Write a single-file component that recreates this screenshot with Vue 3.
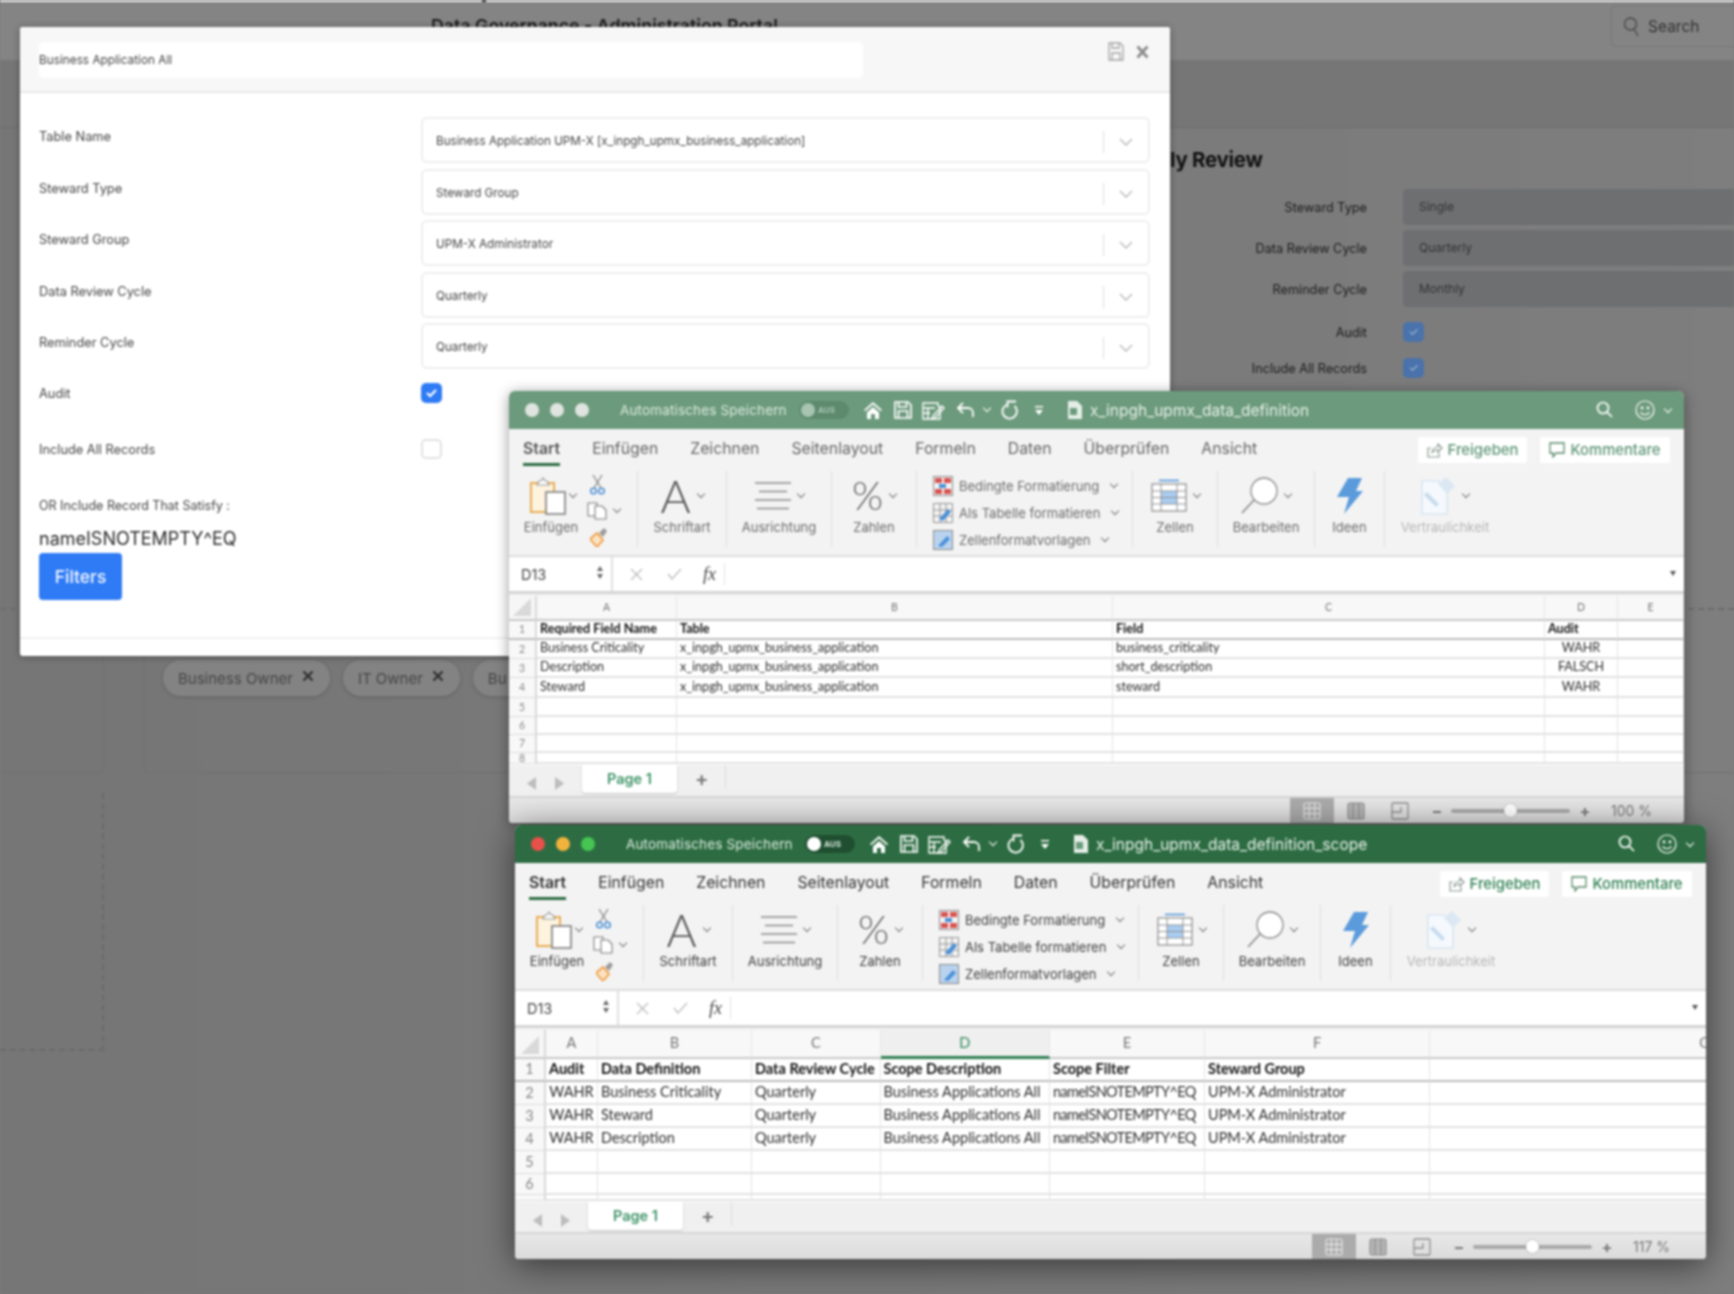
<script setup>
const fields = [
  { label: 'Table Name', value: 'Business Application UPM-X [x_inpgh_upmx_business_application]' },
  { label: 'Steward Type', value: 'Steward Group' },
  { label: 'Steward Group', value: 'UPM-X Administrator' },
  { label: 'Data Review Cycle', value: 'Quarterly' },
  { label: 'Reminder Cycle', value: 'Quarterly' }
]
const bgForm = [
  { label: 'Steward Type', value: 'Single' },
  { label: 'Data Review Cycle', value: 'Quarterly' },
  { label: 'Reminder Cycle', value: 'Monthly' }
]
const tabs = ['Start', 'Einfügen', 'Zeichnen', 'Seitenlayout', 'Formeln', 'Daten', 'Überprüfen', 'Ansicht']
const app = 'x_inpgh_upmx_business_application'
const sheets = [
  {
    id: 'w1',
    file: 'x_inpgh_upmx_data_definition',
    zoom: '100 %',
    heads: ['A', 'B', 'C', 'D', 'E'],
    activeCol: -1,
    center: 3,
    numbered: 8,
    rows: [
      ['Required Field Name', 'Table', 'Field', 'Audit', ''],
      ['Business Criticality', app, 'business_criticality', 'WAHR', ''],
      ['Description', app, 'short_description', 'FALSCH', ''],
      ['Steward', app, 'steward', 'WAHR', ''],
      ['', '', '', '', ''],
      ['', '', '', '', ''],
      ['', '', '', '', ''],
      ['', '', '', '', '']
    ]
  },
  {
    id: 'w2',
    file: 'x_inpgh_upmx_data_definition_scope',
    zoom: '117 %',
    heads: ['A', 'B', 'C', 'D', 'E', 'F', 'G'],
    activeCol: 3,
    center: 0,
    numbered: 6,
    rows: [
      ['Audit', 'Data Definition', 'Data Review Cycle', 'Scope Description', 'Scope Filter', 'Steward Group', ''],
      ['WAHR', 'Business Criticality', 'Quarterly', 'Business Applications All', 'nameISNOTEMPTY^EQ', 'UPM-X Administrator', ''],
      ['WAHR', 'Steward', 'Quarterly', 'Business Applications All', 'nameISNOTEMPTY^EQ', 'UPM-X Administrator', ''],
      ['WAHR', 'Description', 'Quarterly', 'Business Applications All', 'nameISNOTEMPTY^EQ', 'UPM-X Administrator', ''],
      ['', '', '', '', '', '', ''],
      ['', '', '', '', '', '', ''],
      ['', '', '', '', '', '', '']
    ]
  }
]
const formats = [
  { label: 'Bedingte Formatierung', kind: 'cond' },
  { label: 'Als Tabelle formatieren', kind: 'table' },
  { label: 'Zellenformatvorlagen', kind: 'style' }
]
</script>

<template>
  <div class="root">
    <div class="page">
      <div class="strip"><i class="strip-mark"></i></div>
      <header class="topbar">
        <h1 class="portal">Data Governance - Administration Portal</h1>
        <div class="search">
          <svg width="16" height="22" viewBox="0 0 16 22" fill="none" stroke="#4a4a4a" stroke-width="1.4"><circle cx="7.500" cy="9" r="6"/><path d="M11 14l4 7"/></svg>
          <span>Search</span>
        </div>
      </header>
      <div class="subbar"></div>
      <section class="workspace">
        <h2 class="review">ly Review</h2>
        <div v-for="r in bgForm" :key="r.label" class="bg-row">
          <label>{{ r.label }}</label>
          <div class="bg-input">{{ r.value }}</div>
        </div>
        <div class="bg-check first">
          <label>Audit</label>
          <span class="bg-box">✓</span>
        </div>
        <div class="bg-check">
          <label>Include All Records</label>
          <span class="bg-box">✓</span>
        </div>
      </section>
      <section class="panels">
        <div class="panel-left"></div>
        <div class="panel-right">
          <span class="chip">Business Owner <svg width="12" height="12" viewBox="0 0 12 12" stroke="#2f2f2f" stroke-width="2.200"><path d="M1.500 1.500l9 9M10.500 1.500l-9 9"/></svg></span>
          <span class="chip">IT Owner <svg width="12" height="12" viewBox="0 0 12 12" stroke="#2f2f2f" stroke-width="2.200"><path d="M1.500 1.500l9 9M10.500 1.500l-9 9"/></svg></span>
          <span class="chip chip-cut">Bu</span>
        </div>
      </section>
      <div class="drop"></div>
    </div>

    <div class="modal">
      <div class="modal-head">
        <div class="modal-title">Business Application All</div>
        <svg class="modal-save" width="16" height="19" viewBox="0 0 16 19" fill="none" stroke="#a5a5a5" stroke-width="1.3"><path d="M1 1h11l3 3v14H1z"/><path d="M4 1v5h7V1M4 18v-7h8v7"/></svg>
        <svg class="modal-x" width="13" height="14" viewBox="0 0 13 14" stroke="#8b8b8b" stroke-width="2.800"><path d="M1.500 1.500l10 11M11.500 1.500l-10 11"/></svg>
      </div>
      <div class="modal-body">
        <div v-for="f in fields" :key="f.label" class="f-row">
          <label>{{ f.label }}</label>
          <div class="select">
            <span class="select-val">{{ f.value }}</span>
            <svg class="select-chev" width="14" height="8" viewBox="0 0 14 8" fill="none" stroke="#b5b5b5" stroke-width="1.3"><path d="M1 1l6 6 6-6"/></svg>
          </div>
        </div>
        <div class="c-row audit">
          <label>Audit</label>
          <span class="check on">
            <svg width="13" height="10" viewBox="0 0 13 10" fill="none" stroke="#fff" stroke-width="2.2"><path d="M2 5l3.2 3L11 2"/></svg>
          </span>
        </div>
        <div class="c-row include">
          <label>Include All Records</label>
          <span class="check"></span>
        </div>
        <div class="or-label">OR Include Record That Satisfy :</div>
        <div class="query">nameISNOTEMPTY^EQ</div>
        <button class="filters">Filters</button>
        <div class="modal-foot"></div>
      </div>
    </div>

    <div v-for="s in sheets" :key="s.id" class="xl" :class="s.id">
      <div class="title">
        <span class="light l1"></span><span class="light l2"></span><span class="light l3"></span>
        <span class="autosave">Automatisches Speichern</span>
        <span class="toggle"><i></i><em>AUS</em></span>
        <svg class="t-home" width="18" height="17" viewBox="0 0 18 17" fill="#fff"><path d="M9 0L0 8l1.2 1.3L9 2.6l7.8 6.700L18 8zM3 10.500V17h4v-5h4v5h4v-6.500L9 5z"/></svg>
        <svg class="t-save" width="18" height="18" viewBox="0 0 18 18" fill="none" stroke="#fff" stroke-width="1.7"><path d="M1 1h13l3 3v13H1z"/><path d="M4.500 1v5h8V1M4.500 17v-7h9v7"/></svg>
        <svg class="t-edit" width="24" height="20" viewBox="0 0 24 20" fill="none" stroke="#fff" stroke-width="1.4"><path d="M1 3h15v3l2 1v12H1zM1 8h12M6 8v11M1 13h7"/><path d="M11 16l9-10 2 2-9 10-3 1z"/></svg>
        <svg class="t-undo" width="19" height="16" viewBox="0 0 19 16" fill="none" stroke="#fff" stroke-width="1.8"><path d="M7 1L2 6l5 5M2 6h10a5 5 0 0 1 5 5v4"/></svg>
        <i class="chev wh t-ch1"></i>
        <svg class="t-redo" width="18" height="20" viewBox="0 0 18 20" fill="none" stroke="#fff" stroke-width="1.8"><path d="M16 1.500H7.500v6"/><path d="M7.500 4.500a7.200 7.200 0 1 0 7 1.500"/></svg>
        <svg class="t-more" width="8" height="9" viewBox="0 0 8 9" fill="#fff"><path d="M0 0h8v1.500H0zM0 4h8L4 9z"/></svg>
        <svg class="t-file" width="14" height="18" viewBox="0 0 14 18"><path d="M0 0h9l5 5v13H0z" fill="#e4eee7"/><rect x="2" y="7" width="7" height="7" fill="#6c9c7d"/></svg>
        <span class="fname">{{ s.file }}</span>
        <svg class="t-search" width="17" height="17" viewBox="0 0 17 17" fill="none" stroke="#fff" stroke-width="1.7"><circle cx="7" cy="7" r="5.500"/><path d="M11 11l5 5"/></svg>
        <svg class="t-face" width="20" height="20" viewBox="0 0 20 20" fill="none" stroke="#fff" stroke-width="1.2"><circle cx="10" cy="10" r="9"/><circle cx="7" cy="8" r=".8"/><circle cx="13" cy="8" r=".8"/><path d="M5.500 12.500c2.500 3 6.500 3 9 0"/></svg>
        <i class="chev wh t-ch2"></i>
      </div>

      <div class="ribbon">
        <div class="tabs">
          <span v-for="(t, i) in tabs" :key="t" class="tab" :class="{ cur: i === 0 }">{{ t }}</span>
          <span class="btns">
            <span class="btn b-share">
              <svg width="16" height="15" viewBox="0 0 16 15" fill="none" stroke="#8a9a90" stroke-width="1.2"><path d="M4 5H1v9h11v-4"/><path d="M5 10c0-4 3-6 6-6V1l4 4-4 4V7c-3 0-5 1-6 3z"/></svg>
              Freigeben
            </span>
            <span class="btn b-comm">
              <svg width="16" height="16" viewBox="0 0 16 16" fill="none" stroke="#5a8a6b" stroke-width="1.300"><path d="M1 1h14v10H7l-3 4v-4H1z"/></svg>
              Kommentare
            </span>
          </span>
        </div>
        <div class="groups">
          <div class="group g1">
            <div class="paste">
              <div class="gicon">
                <svg width="36" height="38" viewBox="0 0 36 38" fill="none"><path d="M1 6h23v29H1z" fill="#fdf3df" stroke="#e7ad56" stroke-width="2"/><path d="M7 8l2-4h2l2-3 2 3h2l2 4z" fill="#fff" stroke="#9a9a9a" stroke-width="1.200"/><rect x="16" y="15" width="19" height="22" fill="#fff" stroke="#7e7e7e" stroke-width="1.600"/></svg>
                <i class="chev"></i>
              </div>
              <span class="glabel">Einfügen</span>
            </div>
            <div class="mini">
              <svg width="15" height="20" viewBox="0 0 15 20" fill="none" stroke="#7c7c7c" stroke-width="1.100"><path d="M3 0l8 13M12 0L4 13"/><circle cx="3.500" cy="16" r="2.800" stroke="#4c8fd4" stroke-width="1.500"/><circle cx="11.500" cy="16" r="2.800" stroke="#4c8fd4" stroke-width="1.500"/></svg>
              <span class="mini-row">
                <svg width="21" height="18" viewBox="0 0 21 18" fill="#fff" stroke="#7c7c7c" stroke-width="1.100"><path d="M1 1h9v13H1z"/><path d="M8 4h7l4 4v9H8z"/></svg>
                <i class="chev"></i>
              </span>
              <svg width="18" height="20" viewBox="0 0 18 20"><path d="M0 12l7-6 6 7-6 7z" fill="#fbe3c2" stroke="#ee9f48" stroke-width="1.800"/><path d="M9 6l5-5 3 3-4 6z" fill="#9b9b9b"/></svg>
            </div>
          </div>
          <div class="group g2">
            <div class="gicon"><span class="big-a">A</span><i class="chev"></i></div>
            <span class="glabel">Schriftart</span>
          </div>
          <div class="group g3">
            <div class="gicon">
              <svg width="36" height="28" viewBox="0 0 36 28" stroke="#8a8a8a" stroke-width="1.600"><path d="M0 1h36M4 9.500h28M0 18h36M2 26.500h32"/></svg>
              <i class="chev"></i>
            </div>
            <span class="glabel">Ausrichtung</span>
          </div>
          <div class="group g4">
            <div class="gicon"><span class="big-p">%</span><i class="chev"></i></div>
            <span class="glabel">Zahlen</span>
          </div>
          <div class="group g5">
            <div v-for="f in formats" :key="f.kind" class="fmt">
              <svg v-if="f.kind === 'cond'" width="20" height="20" viewBox="0 0 20 20"><rect x=".5" y=".5" width="19" height="19" fill="#f4f4f4" stroke="#8a8a8a"/><rect x="2" y="2" width="7" height="5" fill="#d9534f"/><rect x="11" y="2" width="7" height="5" fill="#d9534f"/><rect x="6" y="8" width="7" height="4" fill="#4a90d9"/><rect x="2" y="13" width="7" height="5" fill="#d9534f"/><rect x="11" y="13" width="7" height="5" fill="#d9534f"/></svg>
              <svg v-else-if="f.kind === 'table'" width="20" height="20" viewBox="0 0 20 20" fill="none"><path d="M.5.500h19v19H.5zM.5 7h19M.5 13h19M7 .500v19M13 .500v19" stroke="#8a8a8a" stroke-width=".9"/><path d="M6 16L15 6l3 3-8 9z" fill="#4a90d9"/></svg>
              <svg v-else width="20" height="20" viewBox="0 0 20 20" fill="none"><rect x=".5" y=".5" width="19" height="19" fill="#b9d3ee" stroke="#8a8a8a"/><path d="M5 16L14 6l3 3-8 8z" fill="#4a90d9"/></svg>
              <span>{{ f.label }}</span>
              <i class="chev"></i>
            </div>
          </div>
          <div class="group g6">
            <div class="gicon">
              <svg width="36" height="33" viewBox="0 0 36 33" fill="none"><path d="M8 1.500h20" stroke="#4a90d9" stroke-width="1.500"/><rect x="1" y="5" width="34" height="27" fill="#fff" stroke="#8a8a8a" stroke-width="1.200"/><rect x="10" y="12" width="16" height="13" fill="#a9cdf0"/><path d="M1 12h34M1 18.500h34M1 25h34M10 5v27M26 5v27" stroke="#8a8a8a" stroke-width=".9"/></svg>
              <i class="chev"></i>
            </div>
            <span class="glabel">Zellen</span>
          </div>
          <div class="group g7">
            <div class="gicon">
              <svg width="37" height="37" viewBox="0 0 37 37" fill="none" stroke="#8a8a8a"><circle cx="23" cy="14" r="13" fill="#fff" stroke-width="1.300"/><path d="M13 23L1 36" stroke-width="1.600"/></svg>
              <i class="chev"></i>
            </div>
            <span class="glabel">Bearbeiten</span>
          </div>
          <div class="group g8">
            <div class="gicon">
              <svg width="26" height="36" viewBox="0 0 26 36"><path d="M11 0h14l-6 13h7L7 36l5-17H0z" fill="#5b9bdc"/></svg>
            </div>
            <span class="glabel">Ideen</span>
          </div>
          <div class="group g9">
            <div class="gicon">
              <svg width="35" height="38" viewBox="0 0 35 38" fill="none"><path d="M1 4h16l9 9v24H1z" fill="#f5f9fd" stroke="#cfe0ef" stroke-width="1.200"/><path d="M6 15l12 12-3 3L3 18z" fill="#c9dcee"/><path d="M17 7l8-7 9 9-8 8z" fill="#dbe8f4"/></svg>
              <i class="chev"></i>
            </div>
            <span class="glabel muted">Vertraulichkeit</span>
          </div>
        </div>
      </div>

      <div class="formula">
        <div class="namebox">
          <span>D13</span>
          <span class="stepper"><i class="up"></i><i class="dn"></i></span>
        </div>
        <svg class="fb-x" width="13" height="13" viewBox="0 0 13 13" stroke="#bdbdbd" stroke-width="1.300"><path d="M1 1l11 11M12 1L1 12"/></svg>
        <svg class="fb-c" width="15" height="12" viewBox="0 0 15 12" fill="none" stroke="#bdbdbd" stroke-width="1.300"><path d="M1 6l4 5 9-10"/></svg>
        <span class="fb-f">fx</span>
        <span class="fb-line"></span>
        <i class="fb-arrow"></i>
      </div>

      <div class="grid-wrap">
        <div class="sheet">
          <div class="corner"><svg width="18" height="18" viewBox="0 0 18 18"><path d="M18 0v18H0z" fill="#d9d9d9"/></svg></div>
          <div v-for="(h, i) in s.heads" :key="h" class="colh" :class="{ act: i === s.activeCol }">{{ h }}</div>
          <template v-for="(r, ri) in s.rows" :key="ri">
            <div class="rowh" :class="{ first: ri === 0 }">{{ ri < s.numbered ? ri + 1 : '' }}</div>
            <div v-for="(c, ci) in r" :key="ci" class="cell" :class="{ bold: ri === 0, first: ri === 0, mid: ri > 0 && ci === s.center, tight: c.startsWith('name') }">{{ c }}</div>
          </template>
        </div>
      </div>

      <div class="sheetbar">
        <svg class="nav" width="9" height="13" viewBox="0 0 9 13" fill="#bdbdbd"><path d="M9 0v13L0 6.500z"/></svg>
        <svg class="nav n2" width="9" height="13" viewBox="0 0 9 13" fill="#bdbdbd"><path d="M0 0v13l9-6.500z"/></svg>
        <span class="page1">Page 1</span>
        <span class="plus">+</span>
      </div>

      <div class="status">
        <span class="view on"><svg width="18" height="18" viewBox="0 0 18 18" fill="none" stroke="#e6e6e6" stroke-width="1.200"><rect x="1" y="1" width="16" height="16" rx="2"/><path d="M1 6.300h16M1 11.600h16M6.300 1v16M11.600 1v16"/></svg></span>
        <span class="view"><svg width="18" height="18" viewBox="0 0 18 18" fill="#b5b5b5" stroke="#8e8e8e" stroke-width="1.200"><rect x="1" y="1" width="16" height="16" rx="2"/><path d="M6 1v16M12 1v16"/></svg></span>
        <span class="view"><svg width="18" height="18" viewBox="0 0 18 18" fill="none" stroke="#8e8e8e" stroke-width="1.300"><rect x="1" y="1" width="16" height="16" rx="1"/><path d="M1 10h9V5"/></svg></span>
        <span class="minus">−</span>
        <span class="slider"><i></i></span>
        <span class="plus2">+</span>
        <span class="pct">{{ s.zoom }}</span>
      </div>
    </div>
  </div>
</template>

<style>
html, body { margin: 0; background: #7b7b7b; }
</style>

<style scoped>
.root { position: relative; width: 1734px; height: 1294px; overflow: hidden; filter: blur(.8px); font-family: Inter, "Liberation Sans", sans-serif; }
.page { height: 1294px; background: linear-gradient(90deg, #767676 0%, #7a7a7a 60%, #7e7e7e 100%); color: #222; }
.strip { height: 2px; background: #ececec; position: relative; }
.strip-mark { position: absolute; left: 482px; top: 0; width: 4px; height: 2px; background: #444; }
.topbar { height: 58px; background: #848484; display: flex; align-items: flex-start; }
.portal { margin: 13px 0 0 431px; font-size: 17.800px; line-height: 22px; font-weight: 600; color: #1d1d1d; white-space: nowrap; }
.search { margin: 3px 0 0 auto; width: 123px; height: 42px; box-sizing: border-box; border: 1px solid #777; border-right: 0; border-radius: 5px 0 0 5px; display: flex; align-items: center; gap: 9px; padding-left: 11px; color: #333; font-size: 15.500px; }
.subbar { height: 68px; background: #767676; border-bottom: 1px solid #6c6c6c; box-sizing: border-box; }
.workspace { height: 480px; padding-top: 20px; box-sizing: border-box; }
.review { margin: 0 0 18px 1170px; font-size: 20.500px; line-height: 23px; font-weight: 700; letter-spacing: -.3px; color: #111; white-space: nowrap; }
.bg-row { display: grid; grid-template-columns: 1367px 1fr; column-gap: 36px; margin-bottom: 5px; }
.bg-row label, .bg-check label { text-align: right; font-size: 12.700px; align-self: center; color: #1a1a1a; }
.bg-input { height: 36px; line-height: 36px; background: #6e6f71; border-radius: 4px 0 0 4px; padding-left: 16px; font-size: 12px; color: #333; }
.bg-check { display: grid; grid-template-columns: 1367px 21px; column-gap: 36px; margin-top: 16px; height: 20px; }
.bg-check.first { margin-top: 15px; }
.bg-box { background: #4a72ab; border-radius: 5px; color: #a3bbda; font-size: 12px; line-height: 20px; text-align: center; }
.panels { height: 165px; display: flex; gap: 40px; border-top: 2px dashed #6b6b6b; box-sizing: border-box; }
.panel-left { width: 104px; border-right: 1px solid #6f6f6f; border-bottom: 1px solid #6f6f6f; box-sizing: border-box; }
.panel-right { flex: 1; border-left: 1px solid #6f6f6f; border-bottom: 1px solid #6f6f6f; padding: 50px 0 0 18px; display: flex; gap: 13px; align-items: flex-start; overflow: hidden; }
.chip { height: 36px; box-sizing: border-box; display: inline-flex; align-items: center; gap: 9px; padding: 0 16px 0 15px; border-radius: 18px; background: #838383; box-shadow: 0 1px 4px rgba(0,0,0,.18); font-size: 15px; color: #464646; white-space: nowrap; }
.chip svg { margin-top: -5px; }
.chip-cut { width: 70px; }
.drop { width: 104px; height: 258px; margin-top: 20px; border-right: 2px dashed #6a6a6a; border-bottom: 2px dashed #6a6a6a; box-sizing: border-box; }

.modal { position: absolute; left: 20px; top: 27px; width: 1150px; height: 629px; background: #fff; border-radius: 3px; box-shadow: 0 1px 7px rgba(0,0,0,.35); color: #444; }
.modal-head { height: 66px; background: #f7f7f7; border-bottom: 2px solid #e9e9e9; box-sizing: border-box; position: relative; padding: 15px 0 0 19px; border-radius: 3px 3px 0 0; }
.modal-title { width: 824px; height: 36px; line-height: 37px; background: #fff; border-radius: 4px; font-size: 11.800px; color: #444; }
.modal-save { position: absolute; left: 1088px; top: 15px; }
.modal-x { position: absolute; left: 1116px; top: 18px; }
.modal-body { padding: 24px 20px 0 19px; }
.f-row { display: grid; grid-template-columns: 382px 729px; height: 46px; margin-bottom: 5.500px; }
.f-row label { font-size: 12.800px; padding-top: 12px; color: #444; }
.select { height: 46px; box-sizing: border-box; border: 2px solid #eee; border-radius: 6px; display: flex; align-items: center; padding: 2px 0 0 13px; position: relative; font-size: 11.700px; color: #444; }
.select::after { content: ""; position: absolute; right: 44px; top: 12px; height: 22px; border-right: 1px solid #ddd; }
.select-chev { position: absolute; right: 15px; top: 19px; }
.c-row { display: grid; grid-template-columns: 382px 21px; height: 20px; font-size: 12.800px; color: #444; align-items: center; }
.c-row.audit { margin-top: 14px; }
.c-row.include { margin-top: 36px; }
.check { width: 21px; height: 20px; box-sizing: border-box; border: 2px solid #e2e2e2; border-radius: 5px; display: flex; align-items: center; justify-content: center; }
.check.on { background: #2f7bf5; border-color: #2f7bf5; }
.or-label { margin-top: 40px; font-size: 12.500px; line-height: 14px; color: #444; }
.query { margin-top: 14px; font-size: 18px; line-height: 24px; color: #2c2c2c; white-space: nowrap; }
.filters { display: block; margin-top: 2px; width: 83px; height: 47px; border: 0; border-radius: 4px; background: #2f7bf5; color: #f2f7ff; font: 500 17.500px Inter, sans-serif; }
.modal-foot { margin-top: 37px; margin-right: -20px; margin-left: -19px; border-top: 2px solid #f1f1f1; }

.xl { position: absolute; border-radius: 6px 6px 4px 4px; background: #f2f2f2; overflow: hidden; }
.w1 { left: 509px; top: 391px; width: 1175px; height: 432px; box-shadow: 0 2px 14px rgba(0,0,0,.4); }
.w2 { left: 515px; top: 825px; width: 1191px; height: 434px; box-shadow: 0 6px 34px rgba(0,0,0,.55); }

.title { height: 38px; display: flex; align-items: center; padding-left: 16px; color: #fff; position: relative; }
.w1 .title { background: #6c9a7c; }
.w2 .title { background: #2d6c42; }
.light { width: 14px; height: 14px; border-radius: 50%; margin-right: 11px; flex: none; background: #dfe4e0; }
.w2 .l1 { background: #e8504a; }
.w2 .l2 { background: #f2b33d; }
.w2 .l3 { background: #46c553; }
.autosave { width: 166px; margin-left: 20px; font-size: 13.500px; letter-spacing: .15px; white-space: nowrap; color: #dcebe1; flex: none; }
.toggle { width: 50px; height: 18px; margin-left: 13px; border-radius: 9px; background: #5d8a6d; position: relative; flex: none; }
.w2 .toggle { background: #1f4f30; }
.toggle i { position: absolute; left: 2px; top: 2px; width: 14px; height: 14px; border-radius: 50%; background: #a8c5b2; }
.w2 .toggle i { background: #fff; }
.toggle em { position: absolute; left: 19px; top: 4px; font: 700 8px/10px Inter, sans-serif; color: #a8c5b2; }
.w2 .toggle em { color: #d4e4da; }
.t-home { margin-left: 15px; flex: none; }
.t-save { margin-left: 12px; flex: none; }
.t-edit { margin-left: 10px; flex: none; }
.t-undo { margin-left: 10px; flex: none; }
.t-ch1 { margin-left: 9px; }
.t-redo { margin-left: 10px; flex: none; }
.t-more { margin-left: 17px; flex: none; }
.t-file { margin-left: 25px; flex: none; }
.fname { margin-left: 8px; font-size: 15.500px; white-space: nowrap; color: #e6f0e9; }
.t-search { position: absolute; right: 71px; top: 10px; }
.t-face { position: absolute; right: 29px; top: 9px; }
.t-ch2 { position: absolute; right: 13px; top: 19px; }

.chev { display: inline-block; width: 5px; height: 5px; border-right: 1.500px solid #777; border-bottom: 1.500px solid #777; transform: rotate(45deg); margin-top: -4px; flex: none; }
.chev.wh { border-color: #fff; }

.ribbon { background: #f3f3f3; height: 128px; border-bottom: 2px solid #dcdcdc; box-sizing: border-box; }
.tabs { height: 42px; display: flex; align-items: flex-start; gap: 32px; padding-left: 14px; position: relative; font-size: 15.800px; color: #666; }
.w2 .tabs { color: #333; }
.tab { line-height: 20px; margin-top: 10px; height: 24px; white-space: nowrap; }
.tab.cur { font-weight: 600; border-bottom: 3px solid #2d6c42; box-sizing: content-box; }
.w1 .tab.cur { color: #555; }
.btns { position: absolute; right: 14px; top: 8px; display: flex; gap: 13px; }
.btn { height: 26px; background: #fff; border-radius: 2px; display: flex; align-items: center; justify-content: center; gap: 5px; font-size: 14.800px; font-weight: 500; color: #5c9474; white-space: nowrap; }
.w2 .btn { color: #2f7f52; }
.b-share { width: 109px; }
.b-comm { width: 130px; }

.groups { display: flex; height: 76px; }
.group { display: flex; flex-direction: column; align-items: center; height: 76px; border-right: 1px solid #dedede; box-sizing: border-box; flex: none; }
.gicon { height: 49px; display: flex; align-items: center; justify-content: center; gap: 7px; }
.glabel { font-size: 13px; line-height: 14px; color: #6a6a6a; white-space: nowrap; }
.w2 .glabel { color: #3c3c3c; }
.w2 .glabel.muted, .glabel.muted { color: #b6b6b6; }
.g1 { width: 129px; flex-direction: row; align-items: flex-start; padding-left: 15px; }
.paste { width: 54px; display: flex; flex-direction: column; align-items: center; }
.paste .gicon { margin-left: 4px; gap: 4px; }
.mini { margin-left: 9px; display: flex; flex-direction: column; gap: 7px; padding-top: 4px; align-items: flex-start; }
.mini > svg { margin-left: 3px; }
.mini-row { display: flex; align-items: center; gap: 6px; }
.g2 { width: 89px; }
.g3 { width: 105px; }
.g4 { width: 85px; }
.g5 { width: 216px; padding: 5px 0 0 16px; align-items: flex-start; gap: 7px; }
.g6 { width: 85px; }
.g7 { width: 97px; }
.g8 { width: 70px; }
.g9 { width: 120px; border-right: 0; }
.big-a { font: 300 46px/45px Lato, sans-serif; color: #555; }
.big-p { font: 300 40px/45px Lato, sans-serif; color: #666; }
.fmt { display: flex; align-items: center; gap: 6px; height: 20px; font-size: 13px; color: #6a6a6a; white-space: nowrap; }
.w2 .fmt { color: #3c3c3c; }
.fmt .chev { margin-left: 6px; }

.formula { height: 34px; background: #fff; border-bottom: 3px solid #d5d5d5; display: flex; align-items: center; position: relative; }
.namebox { width: 104px; height: 34px; border-right: 2px solid #e0e0e0; box-sizing: border-box; padding-left: 12px; display: flex; align-items: center; font-size: 14.500px; color: #444; position: relative; }
.stepper { position: absolute; left: 88px; top: 9px; display: flex; flex-direction: column; gap: 3px; }
.stepper i { width: 0; height: 0; border-left: 3.500px solid transparent; border-right: 3.500px solid transparent; }
.stepper .up { border-bottom: 5px solid #666; }
.stepper .dn { border-top: 5px solid #666; }
.fb-x { margin-left: 17px; }
.fb-c { margin-left: 24px; }
.fb-f { margin-left: 21px; font: italic 18px "Liberation Serif", serif; color: #444; }
.fb-line { height: 22px; margin-left: 8px; border-left: 1px solid #e4e4e4; }
.fb-arrow { position: absolute; right: 8px; top: 14px; width: 0; height: 0; border-left: 3.500px solid transparent; border-right: 3.500px solid transparent; border-top: 5px solid #555; }

.grid-wrap { background: #fff; overflow: hidden; margin-top: 2px; }
.w1 .grid-wrap { height: 169px; }
.w2 .grid-wrap { height: 172px; }
.sheet { display: grid; }
.w1 .sheet { grid-template-columns: 28px 140px 436px 432px 73px 66px; grid-template-rows: 25px 19px 19px 19px 20px 19px 18px 18px 11px; font: 12.600px/1 Lato, sans-serif; }
.w2 .sheet { grid-template-columns: 31px 52px 154px 128.500px 169.500px 155px 225px 550px; grid-template-rows: 29px 23px 23px 23px 23px 23px 21px 6px; font: 14.500px/1 Lato, sans-serif; width: 1465px; }
.corner { background: #f6f6f6; display: flex; align-items: flex-end; justify-content: center; padding-bottom: 3px; border-right: 2px solid #d9d9d9; border-bottom: 2px solid #c8c8c8; box-sizing: border-box; }
.colh { background: #f8f8f8; color: #777; text-align: center; border-right: 1px solid #e6e6e6; border-bottom: 2px solid #c8c8c8; box-sizing: border-box; display: flex; align-items: center; justify-content: center; }
.w1 .colh { font-size: 10.500px; }
.colh.act { background: #efefef; color: #2f8a58; border-bottom: 3px solid #2d7d50; }
.rowh { background: #f8f8f8; color: #888; border-right: 2px solid #d9d9d9; border-bottom: 1px solid #dcdcdc; box-sizing: border-box; display: flex; align-items: center; justify-content: center; overflow: hidden; }
.w1 .rowh { font-size: 10.500px; }
.rowh.first { border-bottom: 2px solid #bdbdbd; }
.cell { padding: 0 3px; border-right: 1px solid #e4e4e4; border-bottom: 2px solid #e2e2e2; box-sizing: border-box; display: flex; align-items: center; white-space: nowrap; overflow: hidden; color: #2e2e2e; background: #fff; }
.cell.first { border-bottom: 2px solid #bdbdbd; }
.cell.bold { font-weight: 700; color: #111; }
.cell.mid { justify-content: center; padding: 0; }
.cell.tight { letter-spacing: -.65px; }

.sheetbar { height: 33px; background: #f0f0f0; border-bottom: 2px solid #d6d6d6; box-sizing: border-box; display: flex; align-items: flex-start; position: relative; padding-left: 18px; }
.w2 .sheetbar { height: 32px; }
.nav { margin-top: 12px; }
.nav.n2 { margin-left: 19px; }
.page1 { margin-left: 18px; width: 95px; height: 28px; background: #fff; border-radius: 0 0 3px 3px; box-shadow: 0 1px 2px rgba(0,0,0,.2); text-align: center; line-height: 27px; font-size: 14.500px; font-weight: 600; color: #3f9468; }
.plus { margin-left: 18px; width: 30px; line-height: 28px; font-size: 20px; font-weight: 600; color: #777; border-right: 1px solid #dcdcdc; height: 24px; text-align: left; }

.status { height: 27px; padding-bottom: 2px; box-sizing: border-box; background: linear-gradient(#e8e8e8, #dadada); position: relative; display: flex; align-items: center; justify-content: flex-end; }
.view { width: 44px; height: 27px; display: flex; align-items: center; justify-content: center; margin-bottom: -2px; }
.view.on { background: #ababab; }
.view svg { margin-top: -2px; }
.minus { margin-left: 9px; width: 12px; font-size: 16px; font-weight: 700; color: #777; text-align: center; line-height: 20px; }
.slider { width: 119px; height: 4px; margin-left: 8px; background: #a9a9a9; border-radius: 2px; position: relative; }
.slider i { position: absolute; left: 53px; top: -5px; width: 13px; height: 13px; border-radius: 50%; background: #fff; box-shadow: 0 0 2px rgba(0,0,0,.3); }
.plus2 { margin-left: 8px; width: 14px; font-size: 16px; font-weight: 700; color: #777; text-align: center; }
.pct { margin-left: 19px; width: 62px; margin-right: 11px; font-size: 14px; color: #777; white-space: nowrap; }
</style>
